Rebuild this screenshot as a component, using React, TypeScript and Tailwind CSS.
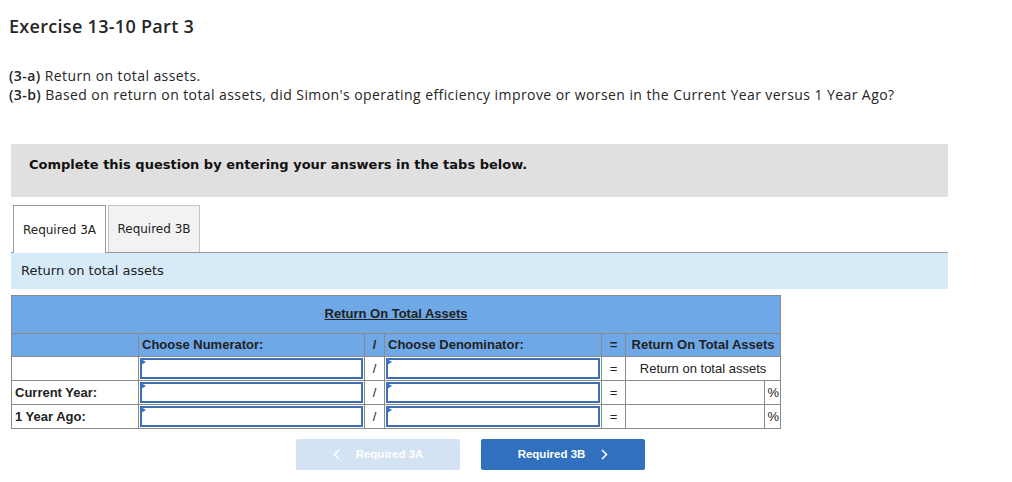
import React from "react";

function Pick() {
  return (
    <div className="relative h-[21px] border-2 border-[#3f6fb3] bg-white">
      <span className="absolute left-[-1px] top-[-1px] h-0 w-0 border-y-[3px] border-l-[5px] border-y-transparent border-l-[#2f74d0]" />
    </div>
  );
}

export default function App(): JSX.Element {
  const cell = "border border-[#8a8a8a] p-0";
  const rows = ["", "Current Year:", "1 Year Ago:"];

  return (
    <div className="w-[1012px] h-[482px] bg-white text-[#222]">
      <h1 className="pl-[9px] pt-[14px] text-[18px] leading-[24px] font-semibold tracking-[0.3px] font-['Open_Sans',sans-serif] text-[#262626]">
        Exercise 13-10 Part 3
      </h1>
      <div className="pl-[9px] mt-[28px] text-[14px] leading-[19px] tracking-[0.42px] font-['Open_Sans',sans-serif] text-[#262626]">
        <p>
          <b className="font-semibold">(3-a)</b> Return on total assets.
        </p>
        <p>
          <b className="font-semibold">(3-b)</b> Based on return on total assets, did Simon's operating efficiency
          improve or worsen in the Current Year versus 1 Year Ago?
        </p>
      </div>

      <div className="ml-[11px] w-[937px] mt-[40px]">
        <div className="h-[53px] bg-[#e0e0e0] pl-[18px] pt-[13px] text-[13px] leading-[16px] font-bold font-['DejaVu_Sans',sans-serif] text-[#111]">
          Complete this question by entering your answers in the tabs below.
        </div>

        <div className="mt-[8px] flex items-end border-b border-[#9a9a9a] font-['DejaVu_Sans',sans-serif] text-[12px] text-[#222]">
          <div className="ml-[2px] -mb-px h-[48px] w-[93px] border border-b-0 border-[#9a9a9a] bg-white flex items-center justify-center">
            Required 3A
          </div>
          <div className="ml-[2px] h-[47px] w-[92px] border border-b-0 border-[#c4c4c4] bg-[#f2f2f2] flex items-center justify-center">
            Required 3B
          </div>
        </div>

        <div className="h-[36px] bg-[#d6eaf8] pl-[10px] flex items-center font-['DejaVu_Sans',sans-serif] text-[13px] text-[#222]">
          Return on total assets
        </div>

        <table className="mt-[6px] w-[769px] table-fixed border-collapse font-['Liberation_Sans',Arial,sans-serif] text-[13px] text-[#222]">
          <colgroup>
            <col className="w-[127px]" />
            <col className="w-[226px]" />
            <col className="w-[20px]" />
            <col className="w-[217px]" />
            <col className="w-[24px]" />
            <col className="w-[139px]" />
            <col className="w-[16px]" />
          </colgroup>
          <thead>
            <tr className="h-[38px] bg-[#6fa8e6]">
              <th colSpan={7} className={`${cell} text-center font-bold pb-px`}>
                <span className="underline">Return On Total Assets</span>
              </th>
            </tr>
            <tr className="h-[23px] bg-[#6fa8e6] font-bold">
              <th className={cell}></th>
              <th className={`${cell} text-left pl-[3px]`}>Choose Numerator:</th>
              <th className={`${cell} text-center`}>/</th>
              <th className={`${cell} text-left pl-[3px]`}>Choose Denominator:</th>
              <th className={`${cell} text-center`}>=</th>
              <th colSpan={2} className={`${cell} text-center`}>Return On Total Assets</th>
            </tr>
          </thead>
          <tbody>
            {rows.map((label, i) => (
              <tr key={i} className="h-[24px]">
                <td className={`${cell} pl-[3px] font-bold`}>{label}</td>
                <td className={`${cell} p-px`}>
                  <Pick />
                </td>
                <td className={`${cell} text-center`}>/</td>
                <td className={`${cell} p-px`}>
                  <Pick />
                </td>
                <td className={`${cell} text-center`}>=</td>
                {i === 0 ? (
                  <td colSpan={2} className={`${cell} text-center`}>
                    Return on total assets
                  </td>
                ) : (
                  <>
                    <td className={cell}></td>
                    <td className={`${cell} text-right pr-px`}>%</td>
                  </>
                )}
              </tr>
            ))}
          </tbody>
        </table>
      </div>

      <div className="mt-[10px] ml-[296px] flex gap-[21px] font-['Liberation_Sans',Arial,sans-serif] text-[11.5px] font-bold text-white">
        <button className="h-[31px] w-[164px] rounded-[2px] bg-[#d4e3f3] flex items-center justify-center gap-[16px]">
          <svg width="7" height="11" viewBox="0 0 7 11" fill="none" stroke="white" strokeWidth="1.6">
            <path d="M6 1 1.5 5.5 6 10" />
          </svg>
          <span>Required 3A</span>
        </button>
        <button className="h-[31px] w-[164px] rounded-[2px] bg-[#3170bf] flex items-center justify-center gap-[16px]">
          <span>Required 3B</span>
          <svg width="7" height="11" viewBox="0 0 7 11" fill="none" stroke="white" strokeWidth="1.6">
            <path d="M1 1 5.5 5.5 1 10" />
          </svg>
        </button>
      </div>
    </div>
  );
}
